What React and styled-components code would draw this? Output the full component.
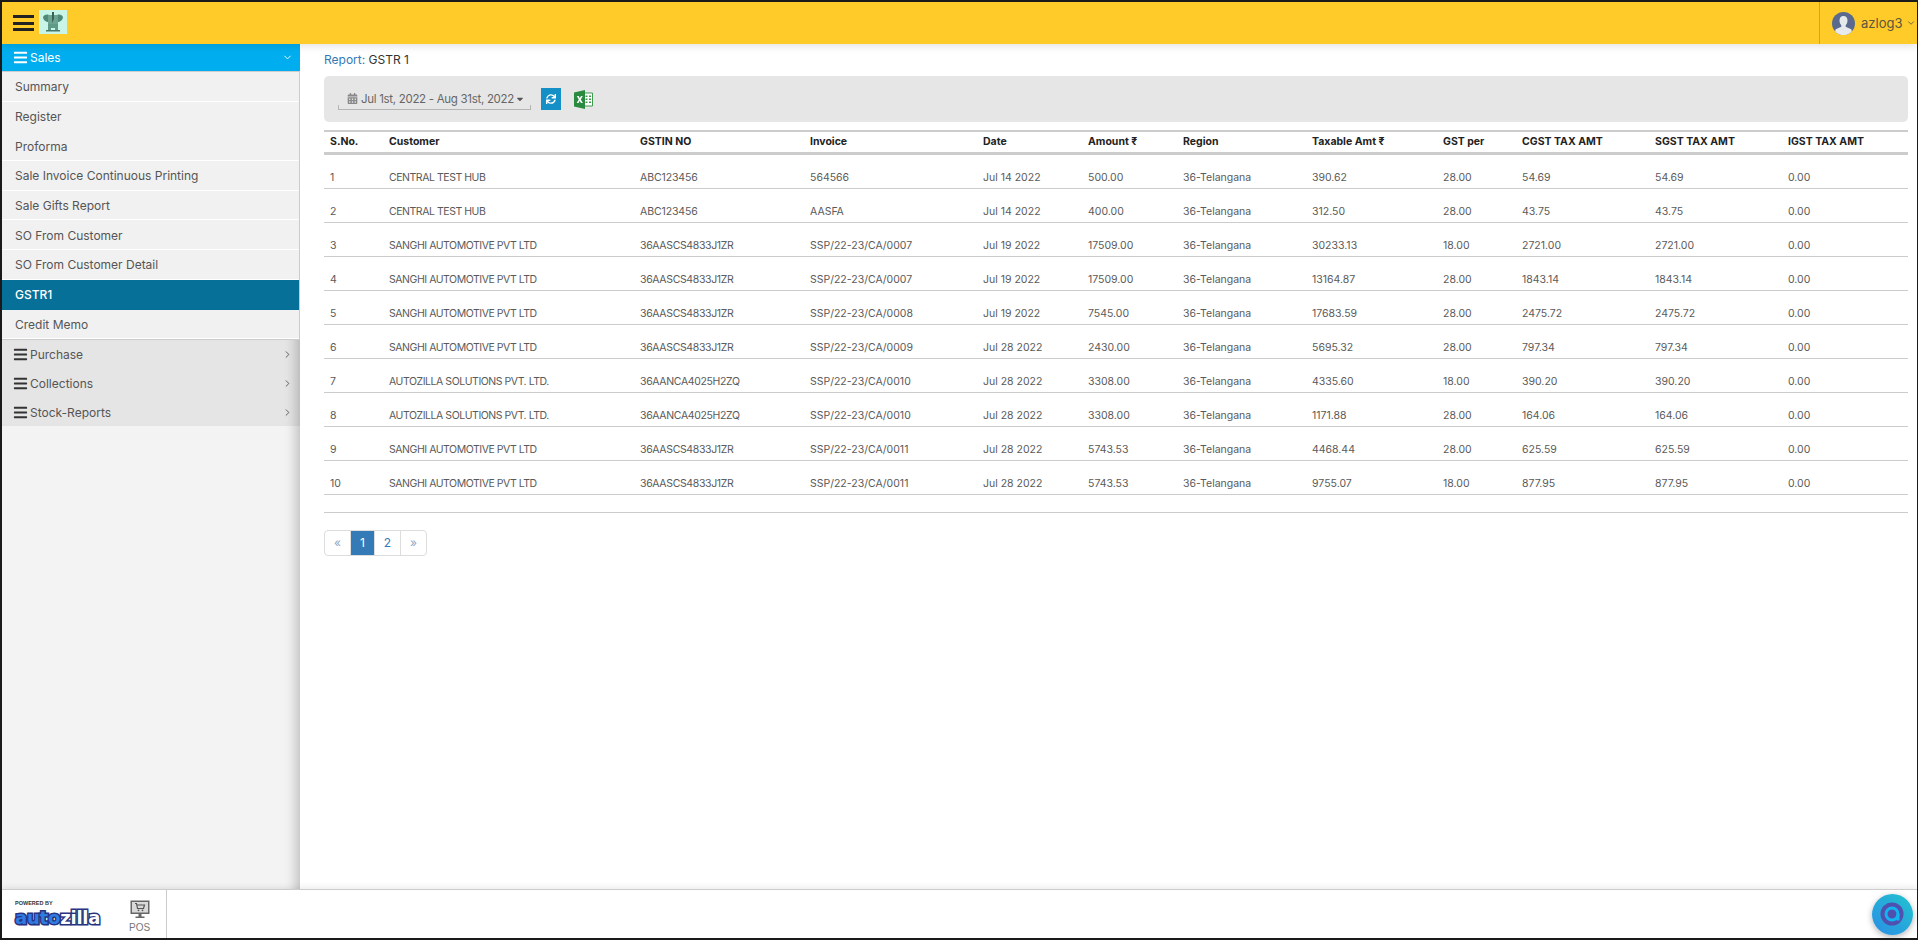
import React from 'react';
import styled, { createGlobalStyle } from 'styled-components';
import { FaBars, FaCalendarAlt, FaCaretDown, FaSync } from 'react-icons/fa';
import { FiChevronDown, FiChevronRight } from 'react-icons/fi';

const GlobalStyle = createGlobalStyle`
  html, body {
    margin: 0;
    padding: 0;
    background: #fff;
  }
  body {
    font-family: Inter, "Open Sans", "Liberation Sans", sans-serif;
    color: #555;
    overflow: hidden;
  }
  * {
    box-sizing: border-box;
  }
`;

const Frame = styled.div`
  position: relative;
  display: flex;
  flex-direction: column;
  width: 1918px;
  height: 940px;
  border-style: solid;
  border-color: #1a1a1a;
  border-width: 2px 1px 2px 2px;
  overflow: hidden;
`;

const Header = styled.header`
  position: relative;
  z-index: 3;
  display: flex;
  align-items: center;
  flex: 0 0 42px;
  padding-left: 11px;
  background: #ffcb29;
  box-shadow: 0 2px 8px rgba(0, 0, 0, 0.12);
`;

const Burger = styled.div`
  display: flex;
  flex-direction: column;
  justify-content: space-between;
  width: 21px;
  height: 16px;
  span {
    display: block;
    height: 3px;
    background: #222;
  }
`;

const LogoBox = styled.div`
  display: flex;
  align-items: center;
  justify-content: center;
  width: 28px;
  height: 24px;
  margin-left: 5px;
  margin-top: -2px;
  background: #c9f5e8;
`;

const UserMenu = styled.div`
  display: flex;
  align-items: center;
  align-self: stretch;
  gap: 6px;
  margin-left: auto;
  width: 98px;
  padding-left: 12px;
  border-left: 1px solid #d6a520;
  color: #5c5540;
  font-size: 13px;
  svg.chev {
    margin-left: -2px;
  }
`;

const Main = styled.div`
  display: flex;
  flex: 1;
  min-height: 0;
`;

const Sidebar = styled.aside`
  flex: 0 0 298px;
  background: #f3f3f3;
  box-shadow: inset -14px 0 12px -10px rgba(0, 0, 0, 0.22);
`;

const MenuHead = styled.div`
  display: flex;
  align-items: center;
  height: ${(p) => (p.$open ? '28px' : '28.6px')};
  padding: ${(p) => (p.$open ? '0 7px 1px 11px' : '1px 7px 0 11px')};
  background: ${(p) => (p.$open ? '#00aeef' : 'transparent')};
  color: ${(p) => (p.$open ? '#fff' : '#555')};
  font-size: 12px;
  svg.bars {
    width: 15px;
    height: 15px;
    margin-right: 2px;
    color: ${(p) => (p.$open ? '#fff' : '#333')};
  }
  svg.chev {
    margin-left: auto;
    width: 11px;
    height: 11px;
  }
`;

const MenuList = styled.div`
  border-top: 1px solid #ccc;
  border-right: 1px solid #ccc;
  margin-top: -1px;
`;

const MenuItem = styled.div`
  display: flex;
  align-items: center;
  height: 29.7px;
  padding: 1px 0 0 13px;
  background: ${(p) => (p.$active ? '#077099' : '#f1f1f1')};
  border-bottom: 1px solid ${(p) => (p.$plain || p.$active ? 'transparent' : '#fff')};
  color: ${(p) => (p.$active ? '#fff' : '#555')};
  font-size: 12px;
  font-weight: ${(p) => (p.$active ? 500 : 400)};
`;

const Groups = styled.div`
  border-top: 1px solid #ccc;
  background: #e5e5e5;
  box-shadow: inset -14px 0 12px -10px rgba(0, 0, 0, 0.22);
`;

const Content = styled.main`
  flex: 1;
  min-width: 0;
  padding: 0 9px 0 24px;
`;

const Crumb = styled.div`
  height: 32px;
  padding-top: 9px;
  font-size: 12px;
  line-height: 14px;
  color: #333;
  span {
    color: #337ab7;
  }
`;

const FilterBar = styled.div`
  display: flex;
  align-items: flex-start;
  height: 46px;
  padding: 12px 14px;
  background: #e6e6e6;
  border-radius: 5px;
`;

const DatePicker = styled.div`
  position: relative;
  display: flex;
  align-items: center;
  width: 193px;
  height: 22px;
  padding-left: 9px;
  color: #666;
  font-size: 11.5px;
  letter-spacing: -0.3px;
  white-space: nowrap;
  border-bottom: 1px solid #b5b5b5;
  svg {
    flex: 0 0 auto;
  }
  &::before,
  &::after {
    content: '';
    position: absolute;
    bottom: 0;
    width: 1px;
    height: 4px;
    background: #b5b5b5;
  }
  &::before {
    left: 0;
  }
  &::after {
    right: 0;
  }
`;

const DateText = styled.span`
  margin: 0 1px 0 3px;
`;

const RefreshButton = styled.button`
  display: flex;
  align-items: center;
  justify-content: center;
  width: 20px;
  height: 22px;
  margin-left: 10px;
  padding: 0;
  border: 0;
  background: #1490c7;
  color: #fff;
`;

const ExcelLink = styled.a`
  display: block;
  width: 19px;
  height: 19px;
  margin-left: 13px;
  margin-top: 2px;
`;

const Table = styled.table`
  width: 100%;
  margin-top: 8px;
  border-collapse: collapse;
  table-layout: fixed;
  border-top: 2px solid #ccc;
  border-bottom: 1px solid #ccc;
`;

const Th = styled.th`
  width: ${(p) => p.$w}px;
  height: 22px;
  padding: 0 6px;
  border-bottom: 3px solid #ccc;
  color: #222;
  font-size: 10.5px;
  font-weight: 700;
  text-align: left;
  white-space: nowrap;
`;

const Td = styled.td`
  height: 34px;
  padding: 17px 6px 4px;
  border-bottom: 1px solid #ccc;
  color: #5a5a5a;
  font-size: 10.5px;
  line-height: 12px;
  letter-spacing: ${(p) => p.$spacing || 0}px;
  white-space: nowrap;
`;

const EmptyCell = styled.td`
  height: 18px;
  padding: 0;
`;

const Pager = styled.ul`
  display: flex;
  width: max-content;
  margin: 17px 0 0;
  padding: 0;
  list-style: none;
`;

const PageLink = styled.li`
  display: flex;
  align-items: center;
  justify-content: center;
  width: ${(p) => p.$w}px;
  height: 26px;
  margin-left: -1px;
  border: 1px solid #ddd;
  background: ${(p) => (p.$active ? '#337ab7' : '#fff')};
  color: ${(p) => (p.$active ? '#fff' : p.$muted ? '#8fa9c4' : '#337ab7')};
  font-size: 12px;
  &:first-child {
    margin-left: 0;
    border-radius: 4px 0 0 4px;
  }
  &:last-child {
    border-radius: 0 4px 4px 0;
  }
`;

const Footer = styled.footer`
  position: relative;
  z-index: 2;
  display: flex;
  flex: 0 0 49px;
  border-top: 1px solid #ccc;
  background: #fff;
  box-shadow: 0 -2px 6px rgba(0, 0, 0, 0.08);
`;

const FooterLeft = styled.div`
  display: flex;
  width: 165px;
  border-right: 1px solid #ccc;
`;

const Brand = styled.div`
  width: 127px;
  padding: 10px 0 0 13px;
`;

const Powered = styled.div`
  color: #333;
  font-family: "Liberation Sans", sans-serif;
  font-size: 5.5px;
  font-weight: 700;
  line-height: 6px;
`;

const BrandName = styled.div`
  margin-top: 1px;
  color: #2f7be0;
  font-family: "DejaVu Sans", sans-serif;
  font-size: 18px;
  font-weight: 700;
  line-height: 22px;
  letter-spacing: -0.2px;
  white-space: nowrap;
  -webkit-text-stroke: 3px #27337f;
  paint-order: stroke fill;
  span {
    color: #fff;
  }
`;

const PosLink = styled.div`
  display: flex;
  flex-direction: column;
  align-items: center;
  gap: 3px;
  padding-top: 10px;
  color: #777;
  font-family: "Liberation Sans", sans-serif;
  font-size: 10px;
  line-height: 12px;
`;

const Fab = styled.div`
  position: absolute;
  right: 4px;
  bottom: 3px;
  z-index: 5;
  width: 41px;
  height: 41px;
  border-radius: 50%;
  background: linear-gradient(40deg, #2a8ee6, #22c3cf);
  box-shadow: 0 2px 6px rgba(0, 0, 0, 0.3);
`;

const columns = [
  ['S.No.', 59],
  ['Customer', 251],
  ['GSTIN NO', 170],
  ['Invoice', 173],
  ['Date', 105],
  ['Amount ₹', 95],
  ['Region', 129],
  ['Taxable Amt ₹', 131],
  ['GST per', 79],
  ['CGST TAX AMT', 133],
  ['SGST TAX AMT', 133],
  ['IGST TAX AMT', 126],
];

const hub = 'CENTRAL TEST HUB';
const sanghi = 'SANGHI AUTOMOTIVE PVT LTD';
const zilla = 'AUTOZILLA SOLUTIONS PVT. LTD.';
const sanghiNo = '36AASCS4833J1ZR';
const zillaNo = '36AANCA4025H2ZQ';

const rows = [
  [hub, 'ABC123456', '564566', 'Jul 14 2022', '500.00', '390.62', '28.00', '54.69'],
  [hub, 'ABC123456', 'AASFA', 'Jul 14 2022', '400.00', '312.50', '28.00', '43.75'],
  [sanghi, sanghiNo, 'SSP/22-23/CA/0007', 'Jul 19 2022', '17509.00', '30233.13', '18.00', '2721.00'],
  [sanghi, sanghiNo, 'SSP/22-23/CA/0007', 'Jul 19 2022', '17509.00', '13164.87', '28.00', '1843.14'],
  [sanghi, sanghiNo, 'SSP/22-23/CA/0008', 'Jul 19 2022', '7545.00', '17683.59', '28.00', '2475.72'],
  [sanghi, sanghiNo, 'SSP/22-23/CA/0009', 'Jul 28 2022', '2430.00', '5695.32', '28.00', '797.34'],
  [zilla, zillaNo, 'SSP/22-23/CA/0010', 'Jul 28 2022', '3308.00', '4335.60', '18.00', '390.20'],
  [zilla, zillaNo, 'SSP/22-23/CA/0010', 'Jul 28 2022', '3308.00', '1171.88', '28.00', '164.06'],
  [sanghi, sanghiNo, 'SSP/22-23/CA/0011', 'Jul 28 2022', '5743.53', '4468.44', '28.00', '625.59'],
  [sanghi, sanghiNo, 'SSP/22-23/CA/0011', 'Jul 28 2022', '5743.53', '9755.07', '18.00', '877.95'],
];

const salesItems = [
  { name: 'Summary' },
  { name: 'Register', plain: true },
  { name: 'Proforma' },
  { name: 'Sale Invoice Continuous Printing' },
  { name: 'Sale Gifts Report' },
  { name: 'SO From Customer' },
  { name: 'SO From Customer Detail' },
  { name: 'GSTR1', active: true },
  { name: 'Credit Memo' },
];

function Elephant() {
  return (
    <svg width="22" height="22" viewBox="0 0 22 22">
      <path d="M1 6c2-3 5-3 7-1l1 6H5C2.500 10 1 8 1 6zM21 6c-2-3-5-3-7-1l-1 6h4c2.500-1 4-3 4-5z" fill="#4f8a78" />
      <path d="M6 4h10v10H6z" fill="#6ba592" />
      <path d="M10 1h2v7l-2 4z" fill="#3d5f57" />
      <path d="M6 13h10v6h-3v-2H9v2H6z" fill="#5f9a87" />
      <path d="M4 19h14v1.500H4z" fill="#47776a" />
    </svg>
  );
}

function Avatar() {
  return (
    <svg width="23" height="23" viewBox="0 0 23 23">
      <defs>
        <clipPath id="avatarClip">
          <circle cx="11.500" cy="11.500" r="11.500" />
        </clipPath>
      </defs>
      <g clipPath="url(#avatarClip)">
        <rect width="23" height="23" fill="#5a6a8e" />
        <path d="M11.500 4c2.700 0 4 2 4 4.500 0 2-.8 3.800-1.800 4.700v1.500l5 2.300c1 .5 1.300 1.500 1.300 6.500H3c0-5 .3-6 1.300-6.500l5-2.300v-1.500C8.300 12.300 7.500 10.500 7.500 8.500 7.500 6 8.800 4 11.500 4z" fill="#e6eaec" />
      </g>
    </svg>
  );
}

function ExcelIcon() {
  return (
    <svg width="19" height="19" viewBox="0 0 19 19">
      <path d="M10 3h8.500v13H10z" fill="#fff" stroke="#3f9a4f" />
      <path d="M11.500 5.500h2v1.500h-2zM15 5.500h2v1.500h-2zM11.500 8.500h2V10h-2zM15 8.500h2V10h-2zM11.500 11.500h2V13h-2zM15 11.500h2V13h-2z" fill="#3f9a4f" />
      <path d="M0 2.500 11 0v19L0 16.500z" fill="#2a8a3f" />
      <path d="M2.800 6h1.900l1.100 2.300L7 6h1.800L6.800 9.500 8.900 13H7L5.700 10.700 4.500 13H2.700l2.100-3.500z" fill="#fff" />
    </svg>
  );
}

function PosIcon() {
  return (
    <svg width="20" height="19" viewBox="0 0 20 19">
      <rect x="0.500" y="0.500" width="19" height="13.500" fill="#666" />
      <rect x="2" y="2" width="16" height="10.500" fill="#d9d9d9" />
      <path d="M5 3.500h1.500l1 5h6l1-3.500H7" fill="none" stroke="#555" strokeWidth="1.200" />
      <circle cx="8.500" cy="10.300" r="0.900" fill="#555" />
      <circle cx="12.500" cy="10.300" r="0.900" fill="#555" />
      <path d="M8.500 14h3v2.500h-3zM5.500 16.500h9V18h-9z" fill="#666" />
    </svg>
  );
}

function ChatMark() {
  return (
    <svg width="41" height="41" viewBox="0 0 41 41">
      <circle cx="20" cy="20" r="11.500" fill="#5050ae" />
      <circle cx="20" cy="20" r="6" fill="none" stroke="#12b4f2" strokeWidth="3" />
      <path d="M26 20v6.500" stroke="#12b4f2" strokeWidth="3" />
    </svg>
  );
}

function App() {
  return (
    <>
      <GlobalStyle />
      <Frame>
        <Header>
          <Burger>
            <span />
            <span />
            <span />
          </Burger>
          <LogoBox>
            <Elephant />
          </LogoBox>
          <UserMenu>
            <Avatar />
            azlog3
            <FiChevronDown className="chev" size={10} />
          </UserMenu>
        </Header>
        <Main>
          <Sidebar>
            <MenuHead $open>
              <FaBars className="bars" />
              Sales
              <FiChevronDown className="chev" />
            </MenuHead>
            <MenuList>
              {salesItems.map((item) => (
                <MenuItem key={item.name} $active={item.active} $plain={item.plain}>
                  {item.name}
                </MenuItem>
              ))}
            </MenuList>
            <Groups>
              {['Purchase', 'Collections', 'Stock-Reports'].map((name) => (
                <MenuHead key={name}>
                  <FaBars className="bars" />
                  {name}
                  <FiChevronRight className="chev" />
                </MenuHead>
              ))}
            </Groups>
          </Sidebar>
          <Content>
            <Crumb>
              <span>Report:</span> GSTR 1
            </Crumb>
            <FilterBar>
              <DatePicker>
                <FaCalendarAlt size={11} color="#888" />
                <DateText>Jul 1st, 2022 - Aug 31st, 2022</DateText>
                <FaCaretDown size={10} color="#555" />
              </DatePicker>
              <RefreshButton type="button" aria-label="refresh">
                <FaSync size={10} />
              </RefreshButton>
              <ExcelLink aria-label="excel">
                <ExcelIcon />
              </ExcelLink>
            </FilterBar>
            <Table>
              <thead>
                <tr>
                  {columns.map(([title, w]) => (
                    <Th key={title} $w={w}>{title}</Th>
                  ))}
                </tr>
              </thead>
              <tbody>
                {rows.map((r, i) => (
                  <tr key={i}>
                    <Td>{i + 1}</Td>
                    <Td $spacing={-0.45}>{r[0]}</Td>
                    <Td $spacing={r[1] === 'ABC123456' ? -0.1 : -0.35}>{r[1]}</Td>
                    <Td>{r[2]}</Td>
                    <Td>{r[3]}</Td>
                    <Td>{r[4]}</Td>
                    <Td>36-Telangana</Td>
                    <Td>{r[5]}</Td>
                    <Td>{r[6]}</Td>
                    <Td>{r[7]}</Td>
                    <Td>{r[7]}</Td>
                    <Td>0.00</Td>
                  </tr>
                ))}
                <tr>
                  <EmptyCell colSpan={12} />
                </tr>
              </tbody>
            </Table>
            <Pager>
              <PageLink $w={27} $muted>«</PageLink>
              <PageLink $w={25} $active>1</PageLink>
              <PageLink $w={27}>2</PageLink>
              <PageLink $w={27} $muted>»</PageLink>
            </Pager>
          </Content>
        </Main>
        <Footer>
          <FooterLeft>
            <Brand>
              <Powered>POWERED BY</Powered>
              <BrandName>auto<span>zilla</span></BrandName>
            </Brand>
            <PosLink>
              <PosIcon />
              POS
            </PosLink>
          </FooterLeft>
        </Footer>
        <Fab>
          <ChatMark />
        </Fab>
      </Frame>
    </>
  );
}

export default App;
